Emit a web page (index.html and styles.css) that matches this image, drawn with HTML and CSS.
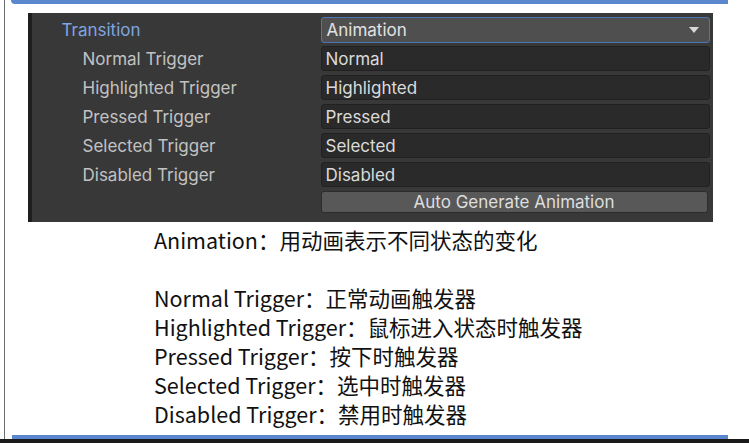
FILE: index.html
```html
<!DOCTYPE html>
<html>
<head>
<meta charset="utf-8">
<link rel="stylesheet" href="styles.css">
</head>
<body>
<div class="page">
  <div class="sheet">
    <div class="topline"></div>
    <div class="panel">
      <div class="row">
        <div class="label label-main">Transition</div>
        <div class="dropdown"><span>Animation</span><span class="arrow"></span></div>
      </div>
      <div class="row">
        <div class="label">Normal Trigger</div>
        <div class="field">Normal</div>
      </div>
      <div class="row">
        <div class="label">Highlighted Trigger</div>
        <div class="field">Highlighted</div>
      </div>
      <div class="row">
        <div class="label">Pressed Trigger</div>
        <div class="field">Pressed</div>
      </div>
      <div class="row">
        <div class="label">Selected Trigger</div>
        <div class="field">Selected</div>
      </div>
      <div class="row">
        <div class="label">Disabled Trigger</div>
        <div class="field">Disabled</div>
      </div>
      <div class="row row-btn">
        <div class="label"></div>
        <div class="button">Auto Generate Animation</div>
      </div>
    </div>
    <div class="notes">
      <p>Animation：用动画表示不同状态的变化</p>
      <p class="blank">&nbsp;</p>
      <p>Normal Trigger：正常动画触发器</p>
      <p>Highlighted Trigger：鼠标进入状态时触发器</p>
      <p>Pressed Trigger：按下时触发器</p>
      <p>Selected Trigger：选中时触发器</p>
      <p>Disabled Trigger：禁用时触发器</p>
    </div>
    <div class="spacer"></div>
    <div class="bottomline"></div>
  </div>
  <div class="blackstrip"></div>
</div>
</body>
</html>
```

FILE: styles.css
```css
html, body {
  margin: 0;
  padding: 0;
  background: #ffffff;
}
.page {
  width: 749px;
  height: 443px;
  overflow: hidden;
  display: flex;
  flex-direction: column;
}
.sheet {
  flex: 1;
  margin-left: 4px;
  border-left: 1.5px solid #6e6e6e;
  display: flex;
  flex-direction: column;
}
.topline {
  margin-left: 6px;
  width: 717px;
  height: 4px;
  background: #5b87cf;
  border-bottom-left-radius: 4px;
}
.panel {
  margin-top: 9px;
  margin-left: 22.5px;
  width: 685px;
  height: 209px;
  box-sizing: border-box;
  background: #383838;
  border-left: 4px solid #1e1e1e;
  padding: 4px 3px 0 0;
  display: flex;
  flex-direction: column;
  gap: 4px;
  font-family: Inter, "Noto Sans", sans-serif;
  font-size: 17px;
}
.panel .row:first-child {
  margin-bottom: -1px;
}
.row {
  display: grid;
  grid-template-columns: 289px 1fr;
  align-items: center;
}
.label {
  padding-left: 51px;
  color: #c2c2c2;
  white-space: nowrap;
}
.label-main {
  padding-left: 30px;
  color: #7fa5e0;
}
.dropdown {
  height: 26px;
  box-sizing: border-box;
  background: #4f4f4f;
  border: 1px solid #4b76b3;
  border-radius: 3px;
  display: flex;
  align-items: center;
  justify-content: space-between;
  padding: 0 10px 0 5px;
  color: #e2e2e2;
}
.arrow {
  width: 0;
  height: 0;
  border-left: 5px solid transparent;
  border-right: 5px solid transparent;
  border-top: 6px solid #d8d8d8;
}
.field {
  height: 25px;
  box-sizing: border-box;
  background: #2a2a2a;
  border: 1px solid #212121;
  border-radius: 3px;
  display: flex;
  align-items: center;
  padding-left: 4px;
  color: #dadada;
}
.button {
  height: 22px;
  box-sizing: border-box;
  margin-right: 2px;
  background: #585858;
  border: 1px solid #2c2c2c;
  border-radius: 3px;
  display: flex;
  align-items: center;
  justify-content: center;
  color: #dedede;
}
.notes {
  margin-top: 3px;
  margin-left: 149px;
  font-family: "Noto Sans CJK SC", sans-serif;
  font-size: 21.5px;
  color: #111111;
}
.notes p {
  margin: 0;
  height: 29px;
  line-height: 29px;
  white-space: nowrap;
}
.spacer {
  flex: 1;
}
.bottomline {
  margin-left: 7px;
  width: 716px;
  height: 4px;
  background: #5b87cf;
}
.blackstrip {
  height: 4px;
  background: #1a1a1a;
}
```
